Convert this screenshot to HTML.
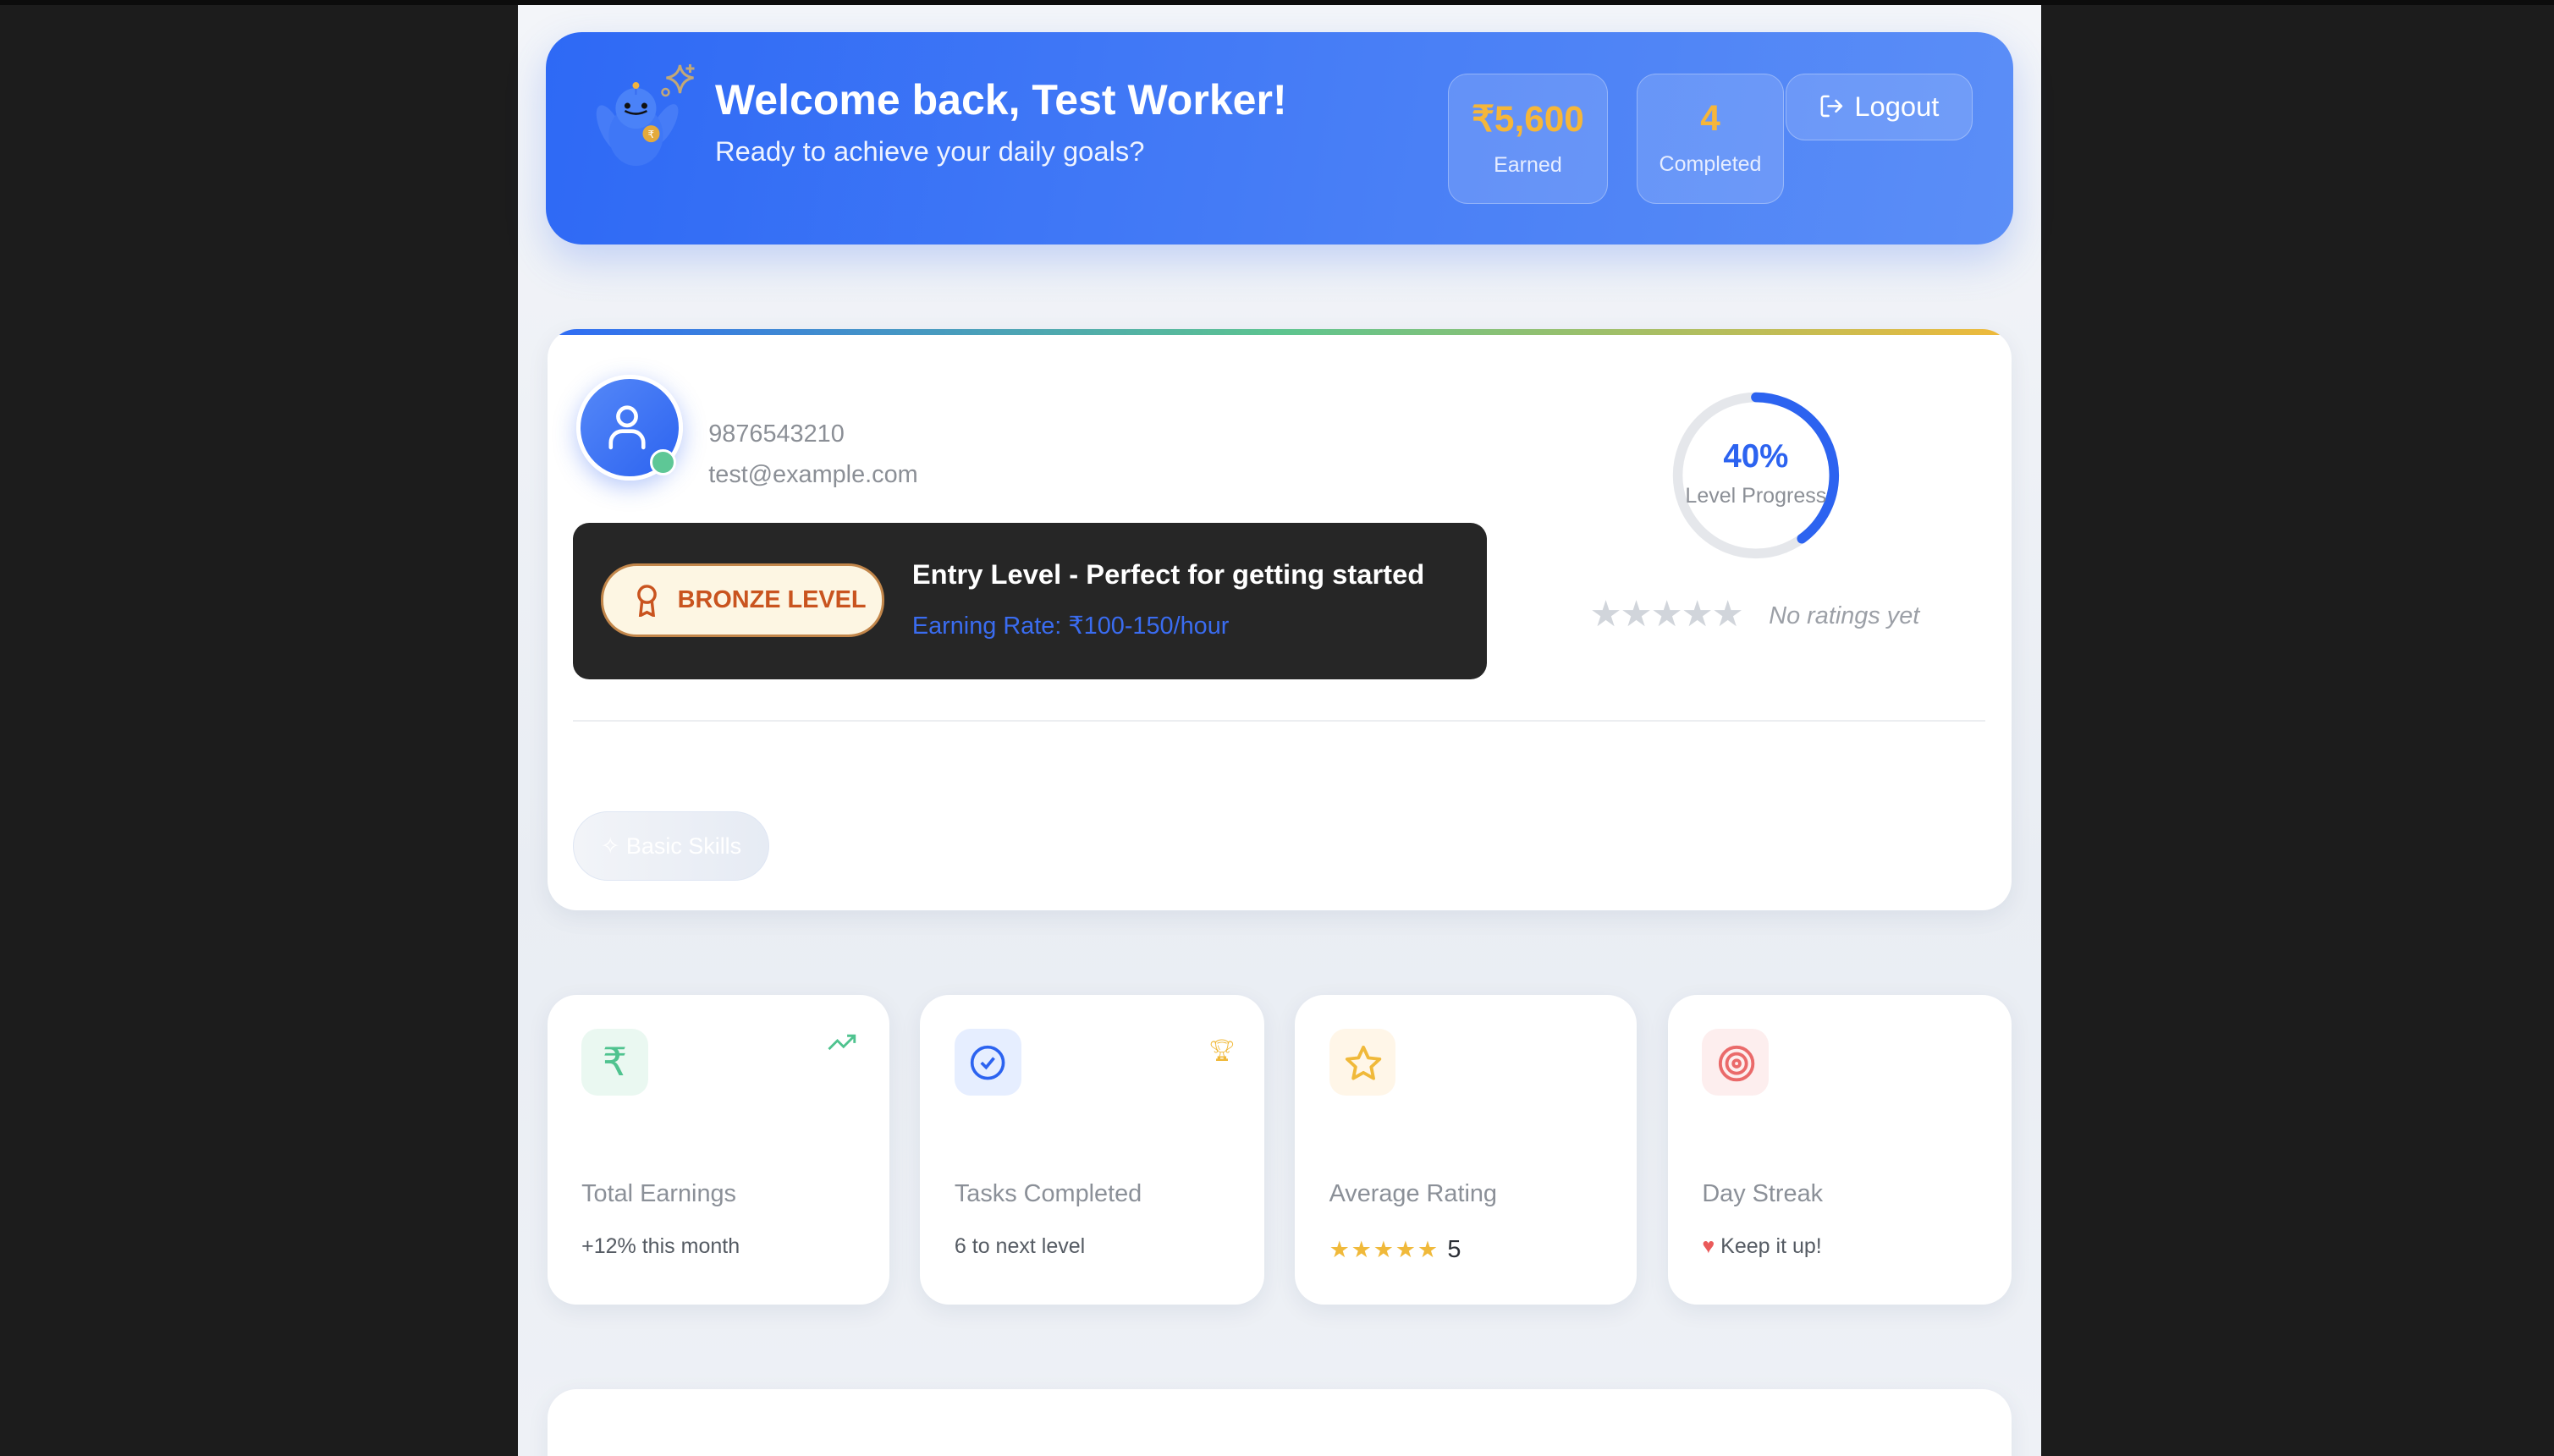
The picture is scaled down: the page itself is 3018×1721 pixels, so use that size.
<!DOCTYPE html>
<html><head><meta charset="utf-8"><style>
html,body{margin:0;padding:0;background:#1c1c1c;overflow:hidden}
#w{position:relative;width:1568px;height:894px;zoom:1.92474;font-family:"Liberation Sans",sans-serif;background:#1c1c1c}
.a{position:absolute}
#col{left:318px;top:3px;width:935px;height:891px;background:linear-gradient(180deg,#f3f5f9,#e9edf3 60%,#eef1f6)}
#hdr{left:335px;top:20px;width:901px;height:130px;border-radius:22px;background:linear-gradient(100deg,#2e69f5,#4a80f6 60%,#5b8ef7);box-shadow:0 10px 24px rgba(60,110,240,.25)}
.sb{border:1px solid rgba(255,255,255,.3);background:rgba(255,255,255,.14);border-radius:12px;color:#fff;text-align:center}
.card{background:#fff;border-radius:18px;box-shadow:0 4px 14px rgba(20,40,90,.07)}
.ib{position:absolute;left:21px;top:21px;width:41px;height:41px;border-radius:10px}
.lb{position:absolute;left:21px;top:114px;font-size:15px;color:#8b9098}
.sub{position:absolute;left:21px;top:147px;font-size:13px;color:#555b63}
</style></head><body><div id="w">
<div class="a" style="left:0;top:0;width:1568px;height:3px;background:#0c0c0c"></div>
<div class="a" id="col"></div>
<div class="a" id="hdr">
 <svg class="a" style="left:23px;top:11px" width="94" height="78" viewBox="0 0 180 150">
  <ellipse cx="32" cy="92" rx="12" ry="30" fill="#4a7ff7" opacity=".85" transform="rotate(-25 32 92)"/>
  <ellipse cx="95" cy="88" rx="11" ry="28" fill="#4a7ff7" opacity=".85" transform="rotate(30 95 88)"/>
  <ellipse cx="62" cy="100" rx="32" ry="36" fill="#3f77f6"/>
  <circle cx="62" cy="68" r="24" fill="#4a82f8"/>
  <line x1="62" y1="44" x2="62" y2="52" stroke="#3a6ef0" stroke-width="2"/>
  <circle cx="62" cy="41" r="4" fill="#f2b33d"/>
  <circle cx="52" cy="65" r="3.5" fill="#111"/><circle cx="72" cy="65" r="3.5" fill="#111"/>
  <path d="M49 71 Q62 78 75 71" stroke="#111" stroke-width="2.5" fill="none"/>
  <circle cx="80" cy="98" r="10" fill="#e4aa3c"/>
  <text x="76" y="103" font-size="12" fill="#fff" font-family="Liberation Sans">₹</text>
  <path d="M114 17 Q116 30 130 32 Q116 34 114 50 Q112 34 98 32 Q112 30 114 17Z" fill="none" stroke="#c2a877" stroke-width="3"/>
  <path d="M126 16v10M121 21h10" stroke="#c2a877" stroke-width="3"/>
  <circle cx="97" cy="49" r="4" fill="none" stroke="#c2a877" stroke-width="2.5"/>
 </svg>
 <div class="a" style="left:104px;top:26px;font-size:26px;font-weight:bold;color:#fff">Welcome back, Test Worker!</div>
 <div class="a" style="left:104px;top:63px;font-size:17px;color:#eef3ff">Ready to achieve your daily goals?</div>
 <div class="a sb" style="left:554px;top:25px;width:97px;height:79px"><div style="margin-top:15px;font-size:22px;font-weight:bold;color:#f5b63a">₹5,600</div><div style="margin-top:8px;font-size:13px;color:#e6edff">Earned</div></div>
 <div class="a sb" style="left:670px;top:25px;width:89px;height:79px"><div style="margin-top:15px;font-size:22px;font-weight:bold;color:#f5b63a">4</div><div style="margin-top:8px;font-size:13px;color:#e6edff">Completed</div></div>
 <div class="a sb" style="left:761px;top:25px;width:114px;height:40px;font-size:17px;line-height:40px">
  <svg width="16" height="16" viewBox="0 0 24 24" style="vertical-align:-2px;margin-right:6px" fill="none" stroke="#fff" stroke-width="2" stroke-linecap="round" stroke-linejoin="round"><path d="M9 21H5a2 2 0 0 1-2-2V5a2 2 0 0 1 2-2h4"/><path d="M16 17l5-5-5-5M21 12H9"/></svg>Logout</div>
</div>

<div class="a card" style="left:336px;top:202px;width:899px;height:357px;overflow:hidden">
 <div class="a" style="left:0;top:0;width:899px;height:4px;background:linear-gradient(90deg,#2f6bf5,#5cc48f 50%,#f0b93a)"></div>
 <div class="a" style="left:18px;top:28px;width:60px;height:60px;border-radius:50%;background:linear-gradient(135deg,#5588f8,#2c63f0);border:3px solid #fff;box-shadow:0 4px 14px rgba(50,100,240,.35)"></div>
 <svg class="a" style="left:36px;top:45px" width="26" height="30" viewBox="0 0 26 30" fill="none" stroke="#fff" stroke-width="2.4" stroke-linecap="round"><circle cx="13" cy="9" r="5.5"/><path d="M3 28v-3a7 7 0 0 1 7-7h6a7 7 0 0 1 7 7v3"/></svg>
 <div class="a" style="left:63px;top:74px;width:13px;height:13px;border-radius:50%;background:#5ec796;border:2px solid #fff"></div>
 <div class="a" style="left:99px;top:56px;font-size:15px;color:#8b8f96">9876543210</div>
 <div class="a" style="left:99px;top:81px;font-size:15px;color:#8b8f96">test@example.com</div>
 <div class="a" style="left:16px;top:119px;width:561px;height:96px;border-radius:10px;background:#262626">
  <div class="a" style="left:17px;top:25px;width:171px;height:42px;border-radius:22px;background:#fdf6e3;border:2px solid #c2864a"></div>
  <svg class="a" style="left:38px;top:38px" width="14" height="20" viewBox="0 0 14 20" fill="none" stroke="#c9541f" stroke-width="1.8"><circle cx="7" cy="6" r="5"/><path d="M4 10l-1 9 4-2 4 2-1-9"/></svg>
  <div class="a" style="left:64px;top:39px;font-size:15px;font-weight:bold;color:#c9541f">BRONZE LEVEL</div>
  <div class="a" style="left:208px;top:22px;font-size:17px;font-weight:bold;color:#fff">Entry Level - Perfect for getting started</div>
  <div class="a" style="left:208px;top:54px;font-size:15px;color:#3a6cf0">Earning Rate: ₹100-150/hour</div>
 </div>
 <svg class="a" style="left:688px;top:36px" width="108" height="108" viewBox="0 0 108 108"><circle cx="54" cy="54" r="48" fill="none" stroke="#e5e7eb" stroke-width="6"/><circle cx="54" cy="54" r="48" fill="none" stroke="#2c63f0" stroke-width="6" stroke-linecap="round" stroke-dasharray="120.6 301.6" transform="rotate(-90 54 54)"/></svg>
 <div class="a" style="left:692px;top:67px;width:100px;text-align:center;font-size:20px;font-weight:bold;color:#2c63f0">40%</div>
 <div class="a" style="left:692px;top:95px;width:100px;text-align:center;font-size:13px;color:#8b8f96">Level Progress</div>
 <div class="a" style="left:640px;top:162px;font-size:22px;color:#d1d5db;letter-spacing:-1px">★★★★★</div>
 <div class="a" style="left:750px;top:168px;font-size:15px;font-style:italic;color:#9ca0a7">No ratings yet</div>
 <div class="a" style="left:16px;top:240px;width:867px;height:1px;background:#eceef1"></div>
 <div class="a" style="left:16px;top:296px;width:119px;height:42px;border-radius:22px;background:linear-gradient(90deg,#f2f4f8,#e6ebf4);border:1px solid #dfe6f3;color:#fff;font-size:14px;line-height:42px;text-align:center">✧ Basic Skills</div>
</div>

<div class="a card" style="left:336px;top:611px;width:210px;height:190px">
 <div class="ib" style="background:#eaf8f1;color:#4fc38f;font-size:24px;text-align:center;line-height:41px">₹</div>
 <svg class="a" style="left:172px;top:22px" width="18" height="14" viewBox="0 0 24 16" fill="none" stroke="#4fc38f" stroke-width="2"><path d="M1 14l7-7 5 5 9-9M16 3h6v6"/></svg>
 <div class="lb">Total Earnings</div><div class="sub">+12% this month</div></div>
<div class="a card" style="left:565px;top:611px;width:211px;height:190px">
 <div class="ib" style="background:#e6eeff"></div>
 <svg class="a" style="left:30px;top:30px" width="23" height="23" viewBox="0 0 24 24" fill="none" stroke="#2c63f0" stroke-width="2"><circle cx="12" cy="12" r="10"/><path d="M8 12l3 3 5-6"/></svg>
 <div class="a" style="left:177px;top:27px;color:#f0b93a;font-size:13px">🏆︎</div>
 <div class="lb">Tasks Completed</div><div class="sub">6 to next level</div></div>
<div class="a card" style="left:795px;top:611px;width:210px;height:190px">
 <div class="ib" style="background:#fff6e8"></div>
 <svg class="a" style="left:30px;top:30px" width="24" height="24" viewBox="0 0 24 24" fill="none" stroke="#f0b93a" stroke-width="2" stroke-linejoin="round"><path d="M12 2l3 6.5 7 .8-5.2 4.8 1.4 7L12 17.6 5.8 21.1l1.4-7L2 9.3l7-.8z"/></svg>
 <div class="lb">Average Rating</div>
 <div class="a" style="left:21px;top:148px;font-size:14px;color:#f0b93a;letter-spacing:1px">★★★★★ <span style="color:#2b2f36;font-size:15px">5</span></div></div>
<div class="a card" style="left:1024px;top:611px;width:211px;height:190px">
 <div class="ib" style="background:#fdeeee"></div>
 <svg class="a" style="left:30px;top:30px" width="24" height="24" viewBox="0 0 24 24" fill="none" stroke="#ea6a6a" stroke-width="2"><circle cx="12" cy="12" r="10"/><circle cx="12" cy="12" r="6"/><circle cx="12" cy="12" r="2"/></svg>
 <div class="sub" style="color:#555b63"><span style="color:#ea5a5a">♥</span> Keep it up!</div>
 <div class="lb">Day Streak</div></div>
<div class="a card" style="left:336px;top:853px;width:899px;height:80px"></div>
</div></body></html>
